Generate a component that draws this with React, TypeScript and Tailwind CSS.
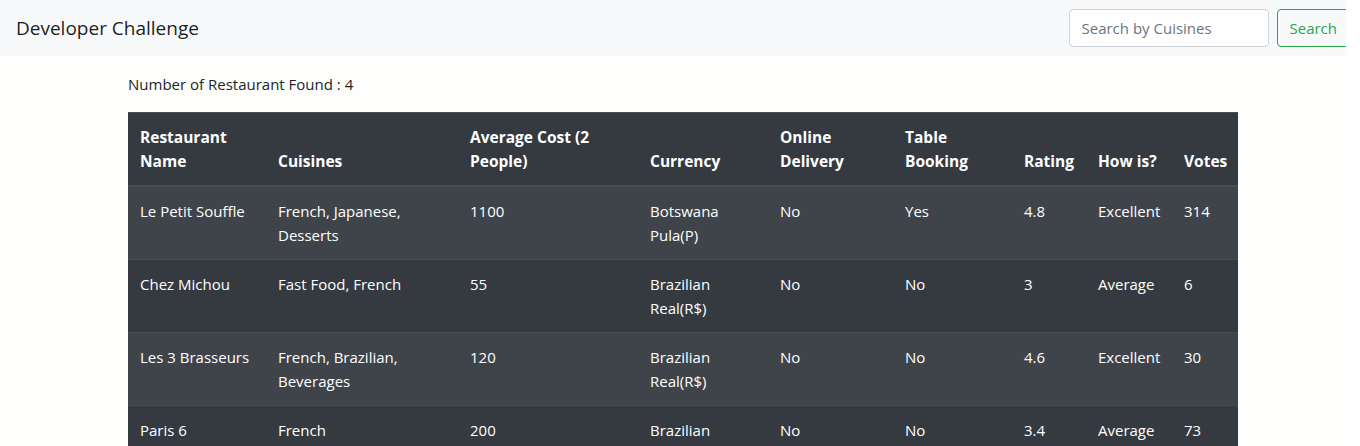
import React from "react";

type Restaurant = {
  name: string;
  cuisines: string;
  cost: string;
  currency: string;
  delivery: string;
  booking: string;
  rating: string;
  how: string;
  votes: string;
};

const restaurants: Restaurant[] = [
  { name: "Le Petit Souffle", cuisines: "French, Japanese, Desserts", cost: "1100", currency: "Botswana Pula(P)", delivery: "No", booking: "Yes", rating: "4.8", how: "Excellent", votes: "314" },
  { name: "Chez Michou", cuisines: "Fast Food, French", cost: "55", currency: "Brazilian Real(R$)", delivery: "No", booking: "No", rating: "3", how: "Average", votes: "6" },
  { name: "Les 3 Brasseurs", cuisines: "French, Brazilian, Beverages", cost: "120", currency: "Brazilian Real(R$)", delivery: "No", booking: "No", rating: "4.6", how: "Excellent", votes: "30" },
  { name: "Paris 6", cuisines: "French", cost: "200", currency: "Brazilian Real(R$)", delivery: "No", booking: "No", rating: "3.4", how: "Average", votes: "73" },
];

const headers = [
  { label: "Restaurant Name", w: "w-[138px]" },
  { label: "Cuisines", w: "w-[192px]" },
  { label: "Average Cost (2 People)", w: "w-[180px]" },
  { label: "Currency", w: "w-[130px]" },
  { label: "Online Delivery", w: "w-[125px]" },
  { label: "Table Booking", w: "w-[119px]" },
  { label: "Rating", w: "w-[74px]" },
  { label: "How is?", w: "w-[86px]" },
  { label: "Votes", w: "w-[66px]" },
];

export default function App() {
  return (
    <div className="w-[1346px] overflow-hidden bg-[#fefefc] min-h-[446px] font-['Open_Sans',sans-serif] text-[#212529]">
      <div className="w-[1366px]">
        {/* Navbar */}
        <nav className="h-14 bg-[#f8f9fa] flex items-center justify-between px-4">
          <span className="text-[19px] leading-[30px] text-black/90">Developer Challenge</span>
          <form className="flex items-center">
            <input
              placeholder="Search by Cuisines"
              className="w-[200px] h-[38px] px-3 border border-[#ced4da] rounded bg-white text-[15px] placeholder:text-[#6c757d] mr-2 outline-none"
            />
            <button type="button" className="h-[38px] px-3 border border-[#28a745] text-[#28a745] rounded text-[15px]">
              Search
            </button>
          </form>
        </nav>

        {/* Content */}
        <div className="w-[1140px] mx-auto px-[15px]">
          <p className="mt-4 mb-4 text-[15px] leading-6">Number of Restaurant Found : 4</p>
          <table className="w-full table-fixed border-collapse bg-[#343a40] text-white text-[15px] leading-6">
            <thead>
              <tr>
                {headers.map((h) => (
                  <th
                    key={h.label}
                    className={`${h.w} p-3 text-left align-bottom font-bold text-[15.5px] border-t border-b-2 border-[#454d55]`}
                  >
                    {h.label}
                  </th>
                ))}
              </tr>
            </thead>
            <tbody>
              {restaurants.map((r, i) => (
                <tr key={r.name} className={i % 2 === 0 ? "bg-white/5" : ""}>
                  {[r.name, r.cuisines, r.cost, r.currency, r.delivery, r.booking, r.rating, r.how, r.votes].map((v, j) => (
                    <td key={j} className="p-3 align-top border-t border-[#454d55]">
                      {v}
                    </td>
                  ))}
                </tr>
              ))}
            </tbody>
          </table>
        </div>
      </div>
    </div>
  );
}
